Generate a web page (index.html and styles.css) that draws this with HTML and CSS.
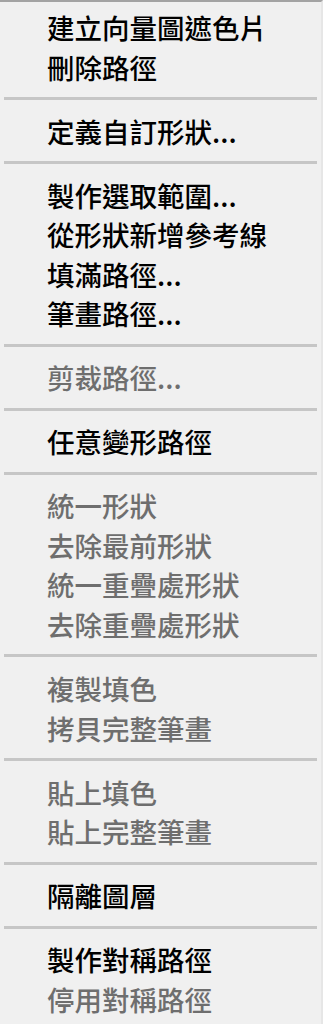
FILE: index.html
```html
<html lang="zh-Hant">
<head>
  <meta charset="UTF-8">
  <meta name="viewport" content="width=device-width, initial-scale=1.0">
  <title>路徑選單</title>
  <link rel="stylesheet" href="styles.css">
</head>
<body>
  <div class="menu">
    <div class="item">建立向量圖遮色片</div>
    <div class="item">刪除路徑</div>
    <div class="separator"></div>

    <div class="item">定義自訂形狀...</div>
    <div class="separator"></div>

    <div class="item">製作選取範圍...</div>
    <div class="item">從形狀新增參考線</div>
    <div class="item">填滿路徑...</div>
    <div class="item">筆畫路徑...</div>
    <div class="separator"></div>

    <div class="item disabled">剪裁路徑...</div>
    <div class="separator"></div>

    <div class="item">任意變形路徑</div>
    <div class="separator"></div>

    <div class="item disabled">統一形狀</div>
    <div class="item disabled">去除最前形狀</div>
    <div class="item disabled">統一重疊處形狀</div>
    <div class="item disabled">去除重疊處形狀</div>
    <div class="separator"></div>

    <div class="item disabled">複製填色</div>
    <div class="item disabled">拷貝完整筆畫</div>
    <div class="separator"></div>

    <div class="item disabled">貼上填色</div>
    <div class="item disabled">貼上完整筆畫</div>
    <div class="separator"></div>

    <div class="item">隔離圖層</div>
    <div class="separator"></div>

    <div class="item">製作對稱路徑</div>
    <div class="item disabled">停用對稱路徑</div>
  </div>
</body>
</html>
```

FILE: styles.css
```css
body {
  margin: 0;
  padding: 0;
  background-color: #f0f0f0;
  font-family: "Noto Sans CJK TC", "Noto Sans", sans-serif;
}

.menu {
  width: 323px;
  height: 1024px;
  box-sizing: border-box;
  padding-top: 6px;
  background-color: #f0f0f0; /* 淺灰色選單 */
  border-top: 2px solid #a3a3a3;
  border-right: 2px solid #e6e6e6;
  overflow: hidden;
}

.item {
  height: 39.5px;
  line-height: 39.5px;
  padding-left: 47px;
  font-size: 27.5px;
  font-weight: 500;
  color: #000;
  white-space: nowrap;
}

.item.disabled {
  color: #6e6e6e; /* 停用項目 */
}

.separator {
  height: 3px;
  margin: 10px 4px 11.6px 4px;
  background-color: #c6c6c6;
}
```
